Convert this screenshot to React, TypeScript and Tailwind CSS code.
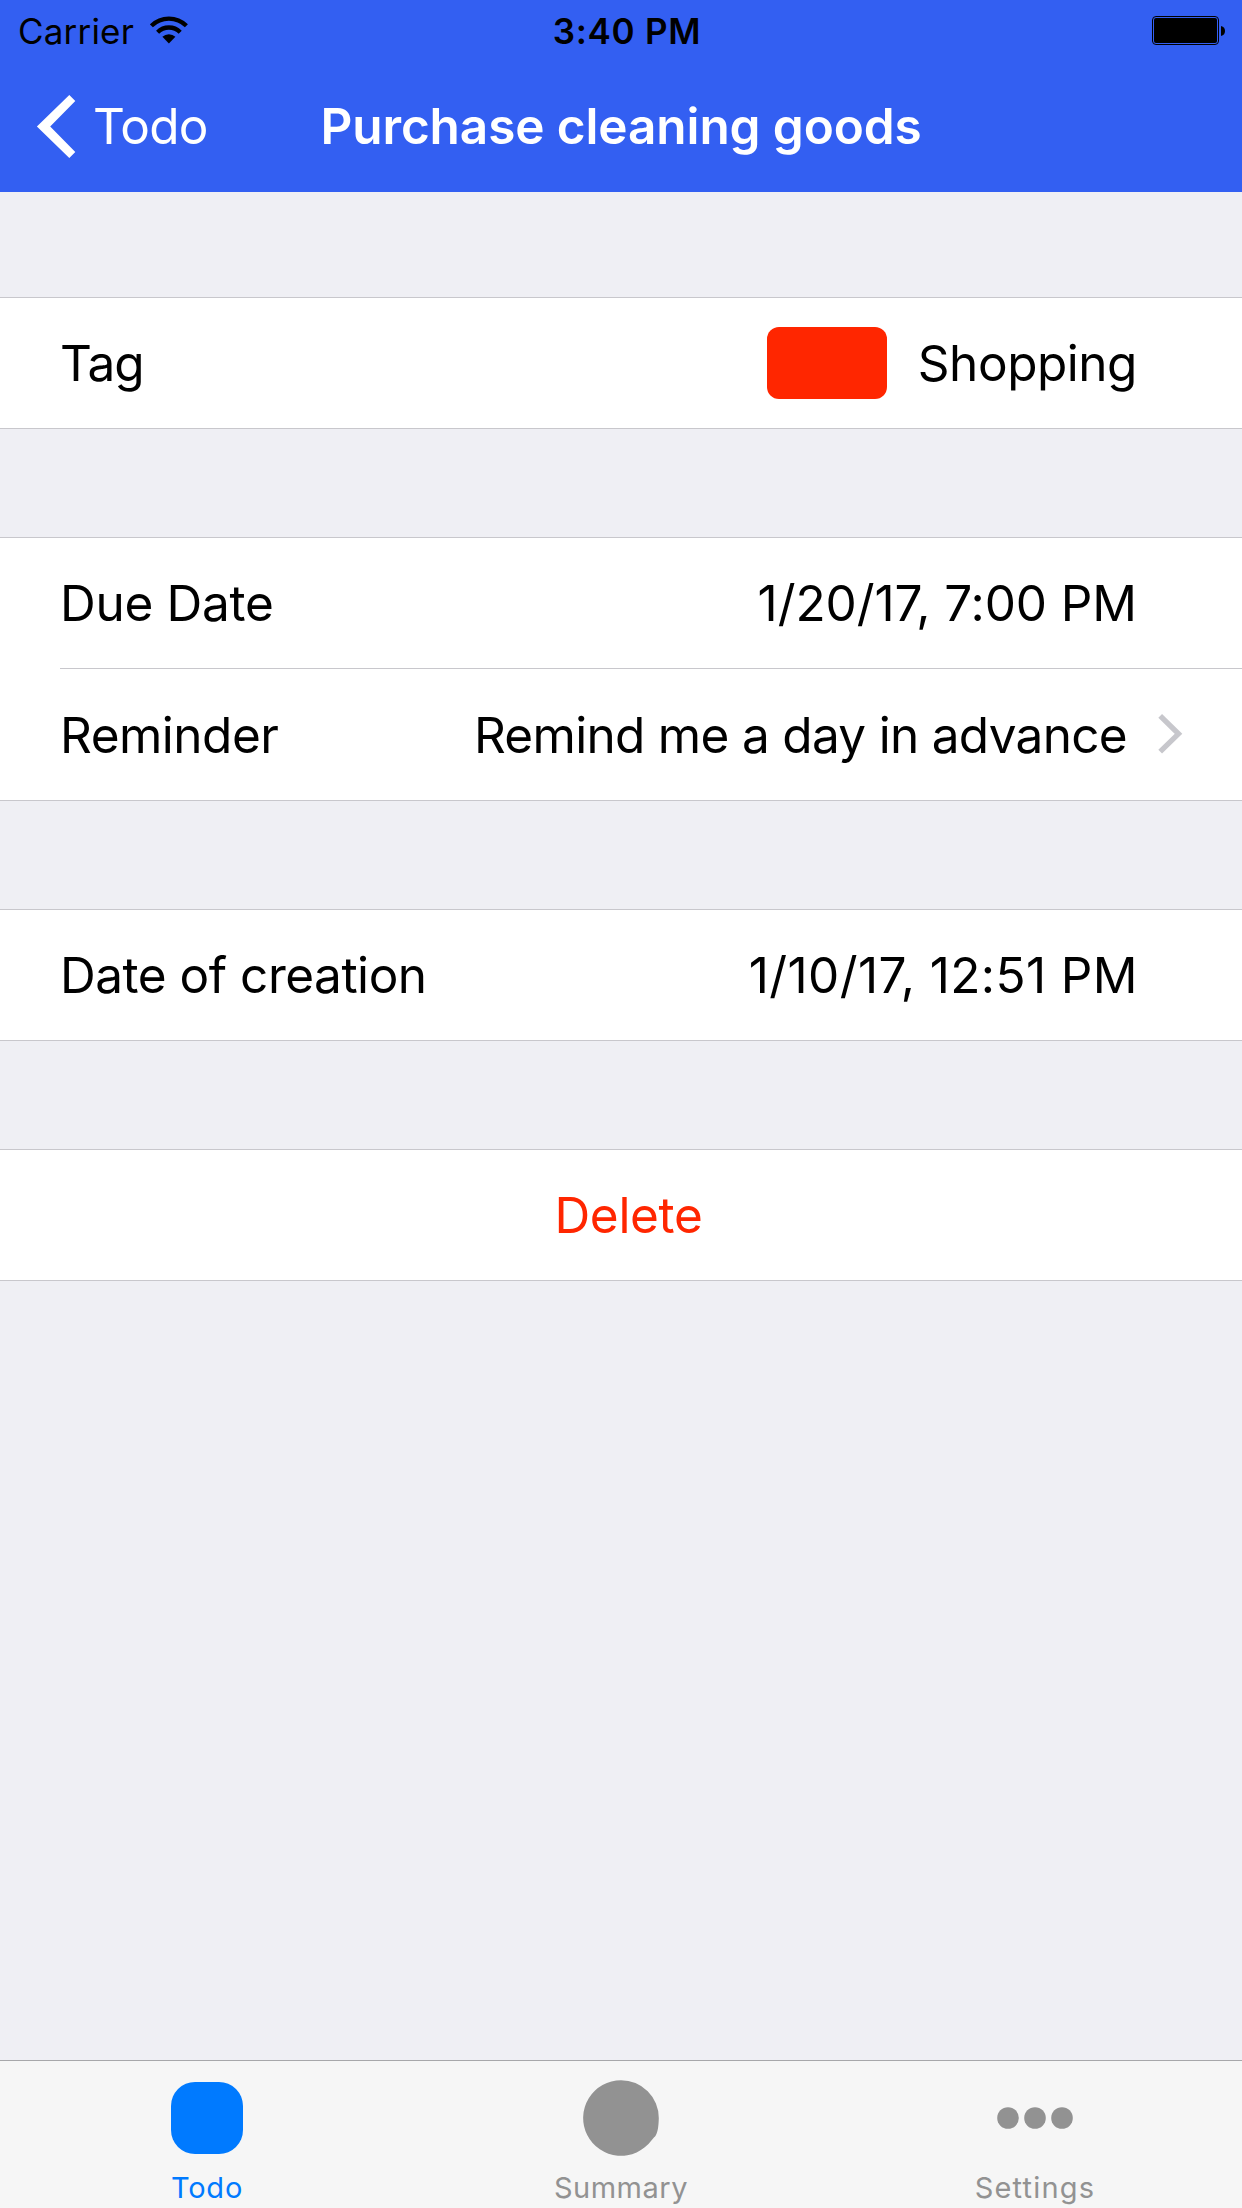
import React from "react";

function WifiIcon() {
  return (
    <svg width="38" height="28" viewBox="0 0 38 28" fill="none" stroke="#000" strokeWidth="4.3">
      <path d="M1.4 9.8A24.9 24.9 0 0 1 36.4 9.8" />
      <path d="M7.6 16.2A15.9 15.9 0 0 1 30.2 16.2" />
      <path d="M18.9 27.4L12.4 20.8A9.3 9.3 0 0 1 25.4 20.8Z" fill="#000" stroke="none" />
    </svg>
  );
}

function BatteryIcon() {
  return (
    <svg width="73" height="29" viewBox="0 0 73 29">
      <rect x="0.5" y="0.5" width="66" height="28" rx="3.5" fill="none" stroke="#000" />
      <rect x="2" y="2" width="63" height="25" rx="2" />
      <path d="M69 10C71.8 10.6 73 12.4 73 15C73 17.6 71.8 19.4 69 20Z" />
    </svg>
  );
}

function StatusBar() {
  return (
    <div className="grid h-[60px] grid-cols-3 text-[35px] leading-[60px] whitespace-nowrap text-black">
      <div className="flex pl-[18px]">
        <span className="w-[132px] pt-px tracking-[0.19px]">Carrier</span>
        <span className="pt-4"><WifiIcon /></span>
      </div>
      <div className="pt-px pl-[12px] text-center font-semibold tracking-[0.71px]">3:40 PM</div>
      <div className="flex justify-end pt-4 pr-[17px]"><BatteryIcon /></div>
    </div>
  );
}

function NavBar() {
  return (
    <div className="grid h-[132px] grid-cols-[310px_1fr_310px] text-[49.5px] leading-[132px] whitespace-nowrap text-white">
      <button className="flex pl-9">
        <svg className="mt-[35px]" width="40" height="63" viewBox="0 0 40 63" fill="#fff">
          <path d="M33.3 0L39.3 6L14.2 31.5L39.3 57L33.3 63L0.9 31.5Z" />
        </svg>
        <span className="pl-[17px] tracking-[-0.75px]">Todo</span>
      </button>
      <h1 className="text-center font-semibold tracking-[-0.1px]">Purchase cleaning goods</h1>
    </div>
  );
}

function Group({ children, className = "" }: { children: React.ReactNode; className?: string }) {
  return <section className={`border-y border-[#c8c7cc] bg-white ${className}`}>{children}</section>;
}

const row = "flex h-[130px] justify-between pr-[104px] pl-[60px]";

function Tab({ label, icon, className }: { label: string; icon: React.ReactNode; className: string }) {
  return (
    <button className={`flex flex-col items-center text-[29px] leading-[36px] ${className}`}>
      <span className="flex h-[109px] items-center pt-[5px]">
        <span className="flex h-[76px] items-center">{icon}</span>
      </span>
      <span>{label}</span>
    </button>
  );
}

export default function App() {
  return (
    <div className="flex h-[2208px] w-[1242px] flex-col overflow-hidden bg-[#efeff4] font-[Inter,sans-serif]">
      <header className="h-[192px] bg-[#335ff2]">
        <StatusBar />
        <NavBar />
      </header>

      <main className="flex-1 pt-[105px] text-[49.5px] leading-[130px] whitespace-nowrap text-black">
        <Group>
          <div className={row}>
            <span className="tracking-[-0.91px]">Tag</span>
            <span className="flex items-center pr-px">
              <span className="mr-[31px] h-[72px] w-[120px] rounded-[12px] bg-[#ff2600]" />
              <span className="tracking-[-0.47px]">Shopping</span>
            </span>
          </div>
        </Group>

        <Group className="mt-[108px]">
          <div className={row}>
            <span className="tracking-[-0.29px]">Due Date</span>
            <span className="pr-px tracking-[-0.08px]">1/20/17, 7:00 PM</span>
          </div>
          <div className="ml-[60px] flex h-[132px] border-t border-[#c8c7cc] pt-px pr-[59px]">
            <span className="tracking-[-0.5px]">Reminder</span>
            <span className="ml-auto tracking-[-0.69px]">Remind me a day in advance</span>
            <svg className="mt-[44px] ml-[31px]" width="25" height="40" viewBox="0 0 25 40" fill="none" stroke="#c7c7cc" strokeWidth="5.3">
              <path d="M2.2 1.9L20.5 19.8L2.2 37.7" />
            </svg>
          </div>
        </Group>

        <Group className="mt-[108px]">
          <div className={row}>
            <span className="tracking-[-0.48px]">Date of creation</span>
            <span className="tracking-[0.41px]">1/10/17, 12:51 PM</span>
          </div>
        </Group>

        <Group className="mt-[108px]">
          <button className="block h-[130px] w-full pl-[15px] text-center tracking-[-0.31px] text-[#ff2600]">Delete</button>
        </Group>
      </main>

      <nav className="grid h-[148px] grid-cols-3 border-t border-[#a7a7aa] bg-[#f6f6f6]">
        <Tab
          label="Todo"
          className="tracking-[0.8px] text-[#007aff]"
          icon={<span className="size-[72px] rounded-[24px] bg-[#007aff]" />}
        />
        <Tab
          label="Summary"
          className="tracking-[0.53px] text-[#929292]"
          icon={
            <svg width="76" height="76" viewBox="0 0 76 76" fill="#929292">
              <path d="M38 0.2A37.8 37.8 0 0 1 75.8 38C75.6 46 75 51 73 55C71.8 57 70.2 58.2 68.4 60.4A37.8 37.8 0 1 1 38 0.2Z" />
            </svg>
          }
        />
        <Tab
          label="Settings"
          className="tracking-[1.18px] text-[#929292]"
          icon={
            <svg width="76" height="22" viewBox="0 0 76 22" fill="#929292">
              <circle cx="11" cy="11" r="10.8" />
              <circle cx="38" cy="11" r="10.8" />
              <circle cx="65" cy="11" r="10.8" />
            </svg>
          }
        />
      </nav>
    </div>
  );
}
